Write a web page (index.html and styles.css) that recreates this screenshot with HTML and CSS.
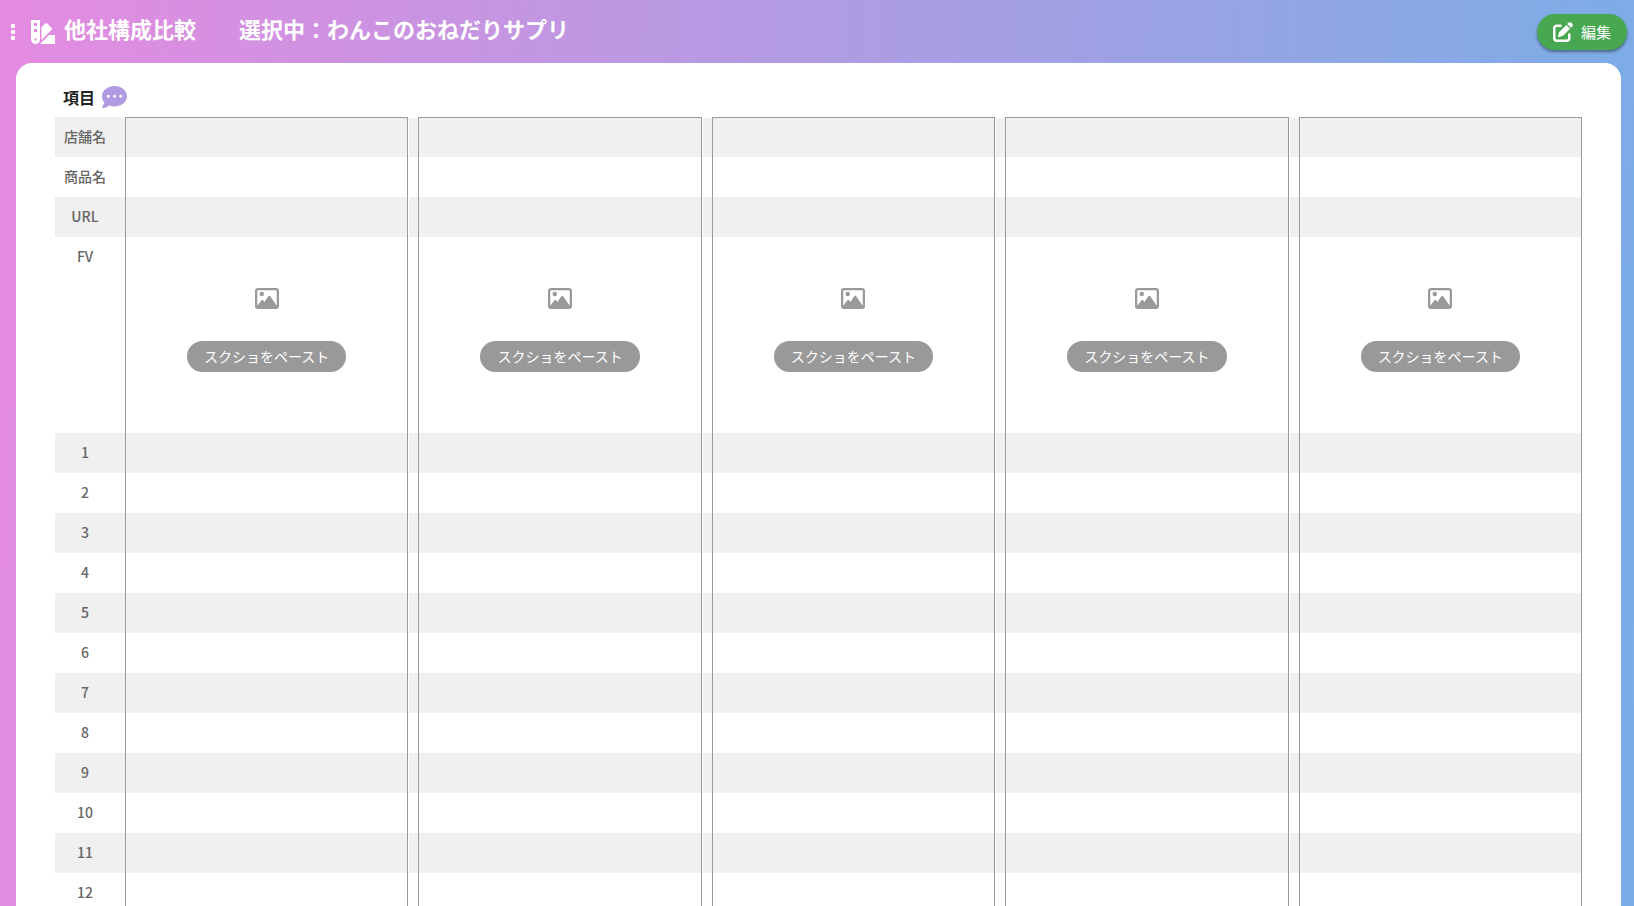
FILE: index.html
```html
<!DOCTYPE html>
<html lang="ja">
<head>
<meta charset="utf-8">
<meta name="viewport" content="width=device-width, initial-scale=1">
<title>他社構成比較</title>
<link rel="stylesheet" href="styles.css">
</head>
<body>
<svg class="defs" aria-hidden="true">
  <symbol id="image" viewBox="0 0 512 448">
    <path fill-rule="evenodd" d="M64 0h384a64 64 0 0 1 64 64v320a64 64 0 0 1-64 64H64a64 64 0 0 1-64-64V64A64 64 0 0 1 64 0zm0 48a16 16 0 0 0-16 16v316l88-117a24 24 0 0 1 38 0l26 36 84-123a24 24 0 0 1 40 0l140 204V64a16 16 0 0 0-16-16z"/>
    <circle cx="144" cy="128" r="48"/>
  </symbol>
</svg>
<header class="topbar">
  <button class="menu" type="button" aria-label="メニュー"><span class="dot"></span><span class="dot"></span><span class="dot"></span></button>
  <svg class="logo" viewBox="0 0 512 512" aria-hidden="true">
    <path fill-rule="evenodd" d="M0 0h192v416a96 96 0 0 1-192 0zm64 64v64h64V64zm0 128v64h64v-64zm32 248a24 24 0 1 0 0-48 24 24 0 0 0 0 48z"/>
    <path d="M224 155l78-78c12.500-12.500 32.700-12.500 45.200 0l90.500 90.500c12.500 12.500 12.500 32.700 0 45.200L223.600 426.900z"/>
    <path d="M192 512l192-192h128v192z"/>
  </svg>
  <h1 class="title">他社構成比較</h1>
  <p class="title selected">選択中：わんこのおねだりサプリ</p>
  <button class="edit" type="button">
    <svg class="edit-icon" viewBox="0 0 512 512" aria-hidden="true">
      <path d="M471.600 21.700c-21.900-21.900-57.300-21.900-79.200 0L362.300 51.700l97.900 97.900 30.100-30.100c21.900-21.900 21.900-57.300 0-79.200zM172.400 241.700c-6.100 6.100-10.800 13.600-13.500 21.900l-29.600 88.800c-2.900 8.600-.6 18.100 5.800 24.600s15.900 8.700 24.600 5.800l88.800-29.600c8.200-2.700 15.700-7.400 21.900-13.500L437.700 172.300 339.700 74.300zM96 64C43 64 0 107 0 160v256c0 53 43 96 96 96h256c53 0 96-43 96-96v-96c0-17.700-14.300-32-32-32s-32 14.300-32 32v96c0 17.700-14.300 32-32 32H96c-17.700 0-32-14.300-32-32V160c0-17.700 14.300-32 32-32h96c17.700 0 32-14.300 32-32s-14.300-32-32-32z"/>
    </svg>
    編集
  </button>
</header>
<main class="panel">
  <div class="heading">
    <h2 class="heading-text">項目</h2>
    <button class="comment" type="button" aria-label="コメント">
      <svg class="comment-icon" viewBox="0 0 512 448" aria-hidden="true">
        <path fill-rule="evenodd" d="M256 0c141 0 256 93 256 208s-115 208-256 208c-39 0-76-7-109-20-27 20-73 52-131 52-16 0-21-17-11-28 19-20 36-49 42-82C17 302 0 257 0 208 0 93 115 0 256 0zM128 176a32 32 0 1 0 0 64 32 32 0 0 0 0-64zm128 0a32 32 0 1 0 0 64 32 32 0 0 0 0-64zm128 0a32 32 0 1 0 0 64 32 32 0 0 0 0-64z"/>
      </svg>
    </button>
  </div>
  <table class="compare">
    <colgroup id="cols"></colgroup>
    <tbody id="rows"></tbody>
  </table>
</main>
<script src="table.js"></script>
</body>
</html>
```
FILE: table.js
```js
const SHOPS = 5;
const SECTIONS = 12;
const labels = ["店舗名", "商品名", "URL", "FV"];
for (let i = 1; i <= SECTIONS; i++) labels.push(String(i));

const paste = '<div class="paste"><svg class="image-icon" aria-hidden="true"><use href="#image"/></svg>' +
  '<button class="paste-button" type="button">スクショをペースト</button></div>';

let cols = '<col class="col-label">';
for (let i = 0; i < SHOPS; i++) {
  cols += `<col class="${i ? "col-gap" : "col-lead"}"><col>`;
}
document.getElementById("cols").innerHTML = cols;

document.getElementById("rows").innerHTML = labels.map((label) => {
  const fv = label === "FV";
  let cells = `<th class="label" scope="row">${label}</th>`;
  for (let i = 0; i < SHOPS; i++) {
    cells += `<td class="${i ? "gap" : "lead"}"></td><td class="shop">${fv ? paste : ""}</td>`;
  }
  return `<tr class="row">${cells}</tr>`;
}).join("");
```
FILE: styles.css
```css
* {
  box-sizing: border-box;
}

body {
  margin: 0;
  height: 100vh;
  overflow: hidden;
  display: flex;
  flex-direction: column;
  background: linear-gradient(93deg, #e48be0, #7aade6);
  font-family: "Noto Sans CJK JP", sans-serif;
  color: #666;
}

button {
  border: 0;
  padding: 0;
  background: none;
  font: inherit;
  cursor: pointer;
}

.defs {
  display: none;
}

.topbar {
  flex: none;
  display: flex;
  align-items: center;
  height: 63px;
  padding: 0 7px 0 11px;
  color: #fff;
}

.menu {
  display: flex;
  flex-direction: column;
  gap: 2px;
  margin-right: 16px;
}

.dot {
  width: 4px;
  height: 4px;
  border-radius: 1px;
  background: #fff;
}

.logo {
  width: 24px;
  height: 24px;
  margin-right: 9px;
  fill: #fff;
}

.title {
  margin: 0 0 8px;
  font-size: 22px;
  line-height: 32px;
  font-weight: 700;
  white-space: nowrap;
}

.selected {
  margin-left: 43px;
}

.edit {
  display: flex;
  align-items: center;
  gap: 8px;
  height: 36px;
  margin-left: auto;
  padding: 0 16px;
  border-radius: 18px;
  background: #48a851;
  box-shadow: 0 2px 3px rgba(0, 0, 0, 0.4);
  color: #fff;
  font-size: 15px;
  font-weight: 400;
}

.edit-icon {
  width: 20px;
  height: 20px;
  fill: #fff;
}

.panel {
  flex: 1;
  min-height: 0;
  overflow: hidden;
  margin: 0 13px 0 16px;
  padding: 22px 39px 0;
  border-radius: 16px 16px 0 0;
  background: #fff;
}

.heading {
  display: flex;
  align-items: center;
  gap: 7px;
  height: 32px;
  padding: 0 0 8px 8px;
}

.heading-text {
  margin: 0;
  color: #222;
  font-size: 16px;
  line-height: 24px;
  font-weight: 700;
}

.comment {
  display: flex;
}

.comment-icon {
  width: 25px;
  height: 22px;
  fill: #b09ae2;
}

.compare {
  width: 100%;
  table-layout: fixed;
  border-collapse: separate;
  border-spacing: 0;
}

.col-label {
  width: 66px;
}

.col-lead {
  width: 4px;
}

.col-gap {
  width: 10px;
}

.row {
  height: 40px;
}

.row:nth-child(even) {
  background: #fff;
}

.row:nth-child(odd) {
  background: #f0f0f0;
}

/* Tall row that holds the screenshot drop areas. */
.row:nth-child(4) {
  height: 196px;
}

.label {
  padding: 7px 6px 7px 0;
  font-size: 14px;
  line-height: 24px;
  font-weight: 500;
  text-align: center;
  vertical-align: top;
}

.lead,
.gap,
.shop {
  padding: 0;
}

.gap {
  border-left: 1px solid #fff;
}

.shop {
  border: solid #999;
  border-width: 0 1px;
}

.row:first-child .shop {
  border-top-width: 1px;
}

.row:first-child .lead,
.row:first-child .gap {
  border-top: 1px solid #fff;
}

.paste {
  display: flex;
  flex-direction: column;
  align-items: center;
  gap: 32px;
  padding-bottom: 10px;
}

.image-icon {
  width: 24px;
  height: 21px;
  fill: #999;
}

.paste-button {
  height: 31px;
  padding: 0 17px 2px;
  border-radius: 16px;
  background: #999;
  color: #fff;
  font-size: 14px;
  font-weight: 400;
}
```
